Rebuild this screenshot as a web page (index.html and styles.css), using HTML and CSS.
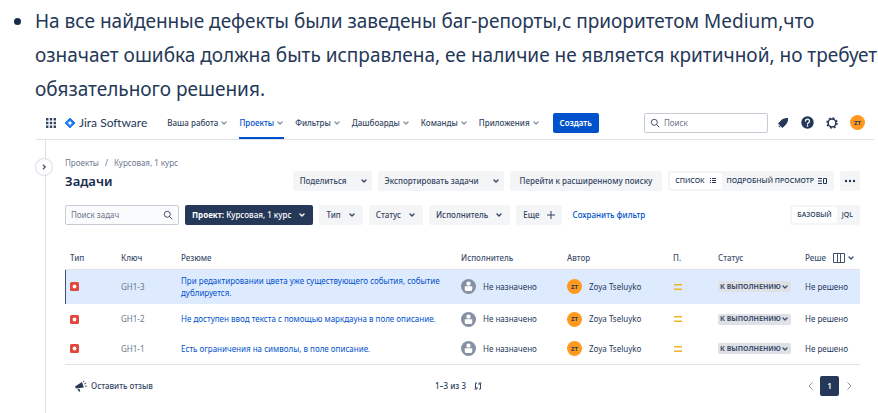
FILE: index.html
```html
<!DOCTYPE html>
<html lang="ru">
<head>
<meta charset="utf-8">
<title>Задачи — Jira Software</title>
<link rel="stylesheet" href="styles.css">
</head>
<body>
<svg class="defs" aria-hidden="true">
  <symbol id="chev" viewBox="0 0 8 8"><path d="M2 3 4 5l2-2" fill="none" stroke="currentColor" stroke-width="1.400" stroke-linecap="round" stroke-linejoin="round"/></symbol>
  <symbol id="lens" viewBox="0 0 10 10"><circle cx="4.300" cy="4.300" r="3" fill="none" stroke="currentColor"/><path d="m6.600 6.600 2.400 2.400" stroke="currentColor" stroke-linecap="round"/></symbol>
  <symbol id="bug" viewBox="0 0 9 9"><rect width="9" height="9" rx="1.500" fill="#e2473d"/><circle cx="4.500" cy="4.500" r="1.900" fill="#fff"/></symbol>
  <symbol id="person" viewBox="0 0 16 16"><circle cx="8" cy="8" r="8" fill="#8590a2"/><circle cx="8" cy="5" r="2.300" fill="#fff"/><path d="M4 7.800h8v3a2 2 0 0 1-2 2H6a2 2 0 0 1-2-2z" fill="#fff"/></symbol>
  <symbol id="medium" viewBox="0 0 10 10"><path d="M1 2.700h8M1 7.300h8" stroke="#f0b429" stroke-width="1.600"/></symbol>
</svg>

<ul class="notes">
  <li>На все найденные дефекты были заведены баг-репорты,с приоритетом Medium,что<br>означает ошибка должна быть исправлена, ее наличие не является критичной, но требует<br>обязательного решения.</li>
</ul>

<div class="app">
  <header class="topbar">
    <button class="icon-btn" aria-label="Приложения Atlassian"><svg width="10" height="10" viewBox="0 0 10 10" fill="#344563"><path d="M0 0h2.400v2.400H0zM3.800 0h2.400v2.400H3.800zM7.600 0H10v2.400H7.600zM0 3.800h2.400v2.400H0zM3.800 3.800h2.400v2.400H3.800zM7.600 3.800H10v2.400H7.600zM0 7.600h2.400V10H0zM3.800 7.600h2.400V10H3.800zM7.600 7.600H10V10H7.600z"/></svg></button>
    <a class="brand" href="#"><svg width="12" height="12" viewBox="0 0 12 12"><path d="M6 1 11 6 6 11 1 6z" fill="#2684ff" stroke="#2684ff" stroke-linejoin="round"/><path d="M6 1 3.500 3.500 6 6l2.500 2.500L11 6z" fill="#1868db" opacity=".4"/><path d="M6 4 8 6 6 8 4 6z" fill="#fff"/></svg><span>Jira Software</span></a>
    <nav class="nav">
      <a href="#">Ваша работа<svg class="chev"><use href="#chev"/></svg></a>
      <a class="active" href="#">Проекты<svg class="chev"><use href="#chev"/></svg></a>
      <a href="#">Фильтры<svg class="chev"><use href="#chev"/></svg></a>
      <a href="#">Дашбоарды<svg class="chev"><use href="#chev"/></svg></a>
      <a href="#">Команды<svg class="chev"><use href="#chev"/></svg></a>
      <a href="#">Приложения<svg class="chev"><use href="#chev"/></svg></a>
    </nav>
    <button class="btn primary">Создать</button>
    <div class="tools">
      <label class="field global"><svg class="lens"><use href="#lens"/></svg><input type="text" placeholder="Поиск" aria-label="Поиск"></label>
      <button class="icon-btn" aria-label="Уведомления"><svg width="12" height="12" viewBox="0 0 12 12" fill="#253858"><path d="M11 1C8 .700 5.400 1.800 3.700 3.700L1 6.600l4.400 4.400 2.900-2.700C10.200 6.600 11.300 4 11 1zM1.800 8.200l2 2A1.500 1.500 0 0 1 1.800 8.200z"/></svg></button>
      <button class="icon-btn" aria-label="Справка"><svg width="13" height="13" viewBox="0 0 13 13"><circle cx="6.500" cy="6.500" r="6.200" fill="#253858"/><path d="M4.500 5.100a2 2 0 1 1 2.900 1.800c-.600.300-.900.600-.9 1.200" fill="none" stroke="#fff" stroke-width="1.300" stroke-linecap="round"/><circle cx="6.500" cy="9.900" r=".8" fill="#fff"/></svg></button>
      <button class="icon-btn" aria-label="Настройки"><svg width="12" height="12" viewBox="0 0 12 12" fill="none" stroke="#253858"><circle cx="6" cy="6" r="3.900" stroke-width="1.500"/><circle cx="6" cy="6" r="5" stroke-width="1.500" stroke-dasharray="1.960 1.960"/></svg></button>
      <span class="avatar">ZT</span>
    </div>
  </header>

  <div class="body">
    <aside class="rail"><button class="expand" aria-label="Развернуть панель"><svg width="8" height="8" viewBox="0 0 8 8"><path d="M3 1.800 5.200 4 3 6.200" fill="none" stroke="#42526e" stroke-width="1.300"/></svg></button></aside>
    <main class="main">
      <div class="crumbs"><a href="#">Проекты</a><span>/</span><a href="#">Курсовая, 1 курс</a></div>
      <div class="row title-row">
        <h1>Задачи</h1>
        <div class="actions">
          <button class="btn wide">Поделиться<svg class="chev"><use href="#chev"/></svg></button>
          <button class="btn wide">Экспортировать задачи<svg class="chev"><use href="#chev"/></svg></button>
          <button class="btn advanced">Перейти к расширенному поиску</button>
          <div class="toggle">
            <button class="on">СПИСОК<svg width="8" height="8" viewBox="0 0 8 8" stroke="currentColor"><path d="M1 1.500h1M3 1.500h4M1 3.500h1M3 3.500h4M1 5.500h1M3 5.500h4"/></svg></button>
            <button>ПОДРОБНЫЙ ПРОСМОТР<svg width="9" height="8" viewBox="0 0 9 8" fill="none" stroke="currentColor"><path d="M0 1.500h4M0 4h4M0 6.500h4M5.500 1.500h3v5h-3z"/></svg></button>
          </div>
          <button class="btn more" aria-label="Ещё"><svg width="12" height="4" viewBox="0 0 12 4" fill="#253858"><circle cx="2" cy="2" r="1.200"/><circle cx="6" cy="2" r="1.200"/><circle cx="10" cy="2" r="1.200"/></svg></button>
        </div>
      </div>
      <div class="row filters">
        <label class="field issue"><input type="text" placeholder="Поиск задач" aria-label="Поиск задач"><svg class="lens"><use href="#lens"/></svg></label>
        <button class="btn dark"><span><b>Проект:</b> Курсовая, 1 курс</span><svg class="chev"><use href="#chev"/></svg></button>
        <button class="btn">Тип<svg class="chev"><use href="#chev"/></svg></button>
        <button class="btn">Статус<svg class="chev"><use href="#chev"/></svg></button>
        <button class="btn">Исполнитель<svg class="chev"><use href="#chev"/></svg></button>
        <button class="btn">Еще<svg width="8" height="8" viewBox="0 0 8 8"><path d="M4 0v8M0 4h8" stroke="currentColor"/></svg></button>
        <a class="save" href="#">Сохранить фильтр</a>
        <div class="toggle mode"><button class="on">БАЗОВЫЙ</button><button>JQL</button></div>
      </div>

      <table class="issues">
        <thead>
          <tr><th class="c-type">Тип</th><th class="c-key">Ключ</th><th>Резюме</th><th class="c-who">Исполнитель</th><th class="c-who">Автор</th><th class="c-prio">П.</th><th class="c-status">Статус</th><th class="c-res"><div class="res-head"><span>Реше</span><button class="icon-btn" aria-label="Столбцы"><svg width="12" height="10" viewBox="0 0 12 10" fill="none" stroke="currentColor"><path d="M.500.500h11v9H.500zM4.500.500v9M7.500.500v9"/></svg><svg class="chev"><use href="#chev"/></svg></button></div></th></tr>
        </thead>
        <tbody>
          <tr class="selected">
            <td><svg class="bug"><use href="#bug"/></svg></td><td><a class="key" href="#">GH1-3</a></td>
            <td><a href="#">При редактировании цвета уже существующего события, событие дублируется.</a></td>
            <td><span class="who"><svg class="person"><use href="#person"/></svg>Не назначено</span></td>
            <td><span class="who"><span class="avatar">ZT</span>Zoya Tseluyko</span></td>
            <td><svg class="medium"><use href="#medium"/></svg></td>
            <td><button class="status">К ВЫПОЛНЕНИЮ<svg class="chev"><use href="#chev"/></svg></button></td><td>Не решено</td>
          </tr>
          <tr>
            <td><svg class="bug"><use href="#bug"/></svg></td><td><a class="key" href="#">GH1-2</a></td>
            <td><a href="#">Не доступен ввод текста с помощью маркдауна в поле описание.</a></td>
            <td><span class="who"><svg class="person"><use href="#person"/></svg>Не назначено</span></td>
            <td><span class="who"><span class="avatar">ZT</span>Zoya Tseluyko</span></td>
            <td><svg class="medium"><use href="#medium"/></svg></td>
            <td><button class="status">К ВЫПОЛНЕНИЮ<svg class="chev"><use href="#chev"/></svg></button></td><td>Не решено</td>
          </tr>
          <tr>
            <td><svg class="bug"><use href="#bug"/></svg></td><td><a class="key" href="#">GH1-1</a></td>
            <td><a href="#">Есть ограничения на символы, в поле описание.</a></td>
            <td><span class="who"><svg class="person"><use href="#person"/></svg>Не назначено</span></td>
            <td><span class="who"><span class="avatar">ZT</span>Zoya Tseluyko</span></td>
            <td><svg class="medium"><use href="#medium"/></svg></td>
            <td><button class="status">К ВЫПОЛНЕНИЮ<svg class="chev"><use href="#chev"/></svg></button></td><td>Не решено</td>
          </tr>
        </tbody>
      </table>

      <footer class="foot">
        <button class="feedback"><svg width="12" height="12" viewBox="0 0 12 12"><path d="M0 6.500 7 2l1.800 5.600L1 8.600zM2.500 9h2l.8 2.500H3.700z" fill="#253858"/><path d="M8.300 2.200 9 .800M9.300 3.900l2-.900M9.900 6l1.900.200" stroke="#253858" stroke-width=".9"/></svg>Оставить отзыв</button>
        <div class="count">1–3 из 3<svg width="8" height="8" viewBox="0 0 8 8" fill="none" stroke="#344563"><path d="M3 1H1.500v5.500M.500 7h2.500V5M5 7h1.500V1.500M7.500 1H5v2"/></svg></div>
        <div class="pager">
          <button aria-label="Назад"><svg width="8" height="8" viewBox="0 0 8 8"><path d="M5.500.500 2 4l3.500 3.500" fill="none" stroke="#8993a4"/></svg></button>
          <button class="current">1</button>
          <button aria-label="Вперёд"><svg width="8" height="8" viewBox="0 0 8 8"><path d="M2.500.500 6 4 2.500 7.500" fill="none" stroke="#8993a4"/></svg></button>
        </div>
      </footer>
    </main>
  </div>
</div>
</body>
</html>
```
FILE: styles.css
```css
* { box-sizing: border-box; }
body { margin: 0; background: #fff; color: #253858; font: 8px/12px "Noto Sans", "Open Sans", sans-serif; }
button, input { font: inherit; color: inherit; border: 0; background: none; padding: 0; margin: 0; }
a { color: #0052cc; text-decoration: none; }
svg { flex: none; display: block; }
.defs { width: 0; height: 0; position: absolute; }
.chev { width: 8px; height: 8px; }
.lens { width: 10px; height: 10px; color: #42526e; }

.notes { margin: 0; padding: 4px 0 0 35px; font-size: 19px; line-height: 34px; color: #253858; list-style: none; white-space: nowrap; }
.notes li { position: relative; }
.notes li::before { content: ""; position: absolute; left: -21px; top: 14px; width: 7px; height: 7px; border-radius: 50%; background: #172b4d; }

.app { margin: 0 4px 0 36px; display: flex; flex-direction: column; }
.topbar { display: flex; align-items: center; height: 34px; padding: 0 9px 0 10px; border-bottom: 1px solid #dfe1e6; }
.icon-btn { display: flex; align-items: center; }
.brand { display: flex; align-items: center; gap: 3px; margin-left: 8px; color: #253858; font: 12px/16px Lato, sans-serif; }
.nav { display: flex; align-self: stretch; gap: 11px; margin-left: 20px; font-weight: 500; }
.nav a { display: flex; align-items: center; gap: 2px; color: #344563; border-bottom: 2px solid transparent; border-top: 2px solid transparent; }
.nav .chev { color: #8993a4; }
.nav .active { color: #0052cc; border-bottom-color: #0052cc; }
.btn { display: flex; align-items: center; justify-content: center; gap: 7px; height: 20px; padding: 0 7px; border-radius: 2px; background: #f4f5f7; color: #344563; font-weight: 500; white-space: nowrap; }
.btn.wide { gap: 13px; padding-right: 4px; }
.btn.advanced { padding: 0 10px; }
.btn.primary { margin-left: 13px; background: #0052cc; color: #fff; font-weight: 600; }
.tools { display: flex; align-items: center; gap: 12px; margin-left: auto; }
.field { display: flex; align-items: center; height: 20px; gap: 4px; padding: 0 5px; border: 1px solid #c7ccd4; border-radius: 2px; }
.field input { flex: 1; min-width: 0; outline: 0; }
.field input::placeholder { color: #6b778c; opacity: 1; }
.field.global { width: 124px; margin-right: -3px; }
.field.issue { width: 114px; background: #fafbfc; }
.avatar { display: flex; align-items: center; justify-content: center; width: 15px; height: 15px; border-radius: 50%; background: #ff991f; color: #253858; font-size: 6px; font-weight: 700; flex: none; }

.body { display: flex; min-height: 273px; }
.rail { width: 10px; border-right: 1px solid #dfe1e6; }
.expand { position: relative; display: flex; align-items: center; justify-content: center; margin-top: 19px; width: 16px; height: 16px; border-radius: 50%; background: #fff; box-shadow: 0 0 2px #97a0af; }
.main { flex: 1; min-width: 0; padding: 17px 14px 0 19px; }
.crumbs { display: flex; gap: 6px; color: #6b778c; }
.crumbs a { color: inherit; }
.row { display: flex; align-items: center; gap: 6px; }
.title-row { justify-content: space-between; margin-top: 2px; }
h1 { margin: 0; font-size: 13px; line-height: 20px; font-weight: 600; color: #172b4d; }
.actions { display: flex; gap: 6px; }
.toggle { display: flex; align-items: center; height: 20px; padding: 2px; border-radius: 2px; background: #f4f5f7; font-size: 7px; font-weight: 500; }
.toggle button { display: flex; align-items: center; gap: 4px; height: 16px; padding: 0 5px; white-space: nowrap; }
.toggle .on { background: #fff; border-radius: 2px; }
.btn.more { padding: 0 4px; }
.filters { margin-top: 14px; }
.btn.dark { background: #253858; color: #fff; }
.save { margin-left: 5px; font-weight: 500; }
.mode { margin-left: auto; }

.issues { width: 100%; margin-top: 22px; table-layout: fixed; border-collapse: collapse; border-bottom: 1px solid #dfe1e6; }
.issues th, .issues td { padding: 0 5px; text-align: left; height: 30px; }
.issues th { height: 22px; font-weight: 500; color: #42526e; border-bottom: 1px solid #dfe1e6; }
.issues td { white-space: nowrap; }
.issues td:nth-child(3) { white-space: normal; }
.issues .selected td { height: 35px; background: #deebff; }
.issues .selected td:first-child { box-shadow: inset 1px 0 #42526e; }
.c-type { width: 51px; }
.c-key { width: 60px; }
.c-who { width: 106px; }
.c-prio { width: 45px; }
.c-status { width: 87px; }
.c-res { width: 60px; }
.res-head { display: flex; justify-content: space-between; }
.res-head .icon-btn { gap: 2px; }
.key { color: #6b778c; }
.bug { width: 9px; height: 9px; }
.person { width: 15px; height: 15px; }
.medium { width: 10px; height: 10px; }
.who { display: flex; align-items: center; gap: 7px; }
.status { display: flex; align-items: center; height: 11px; padding: 0 2px; border-radius: 2px; background: #dfe1e6; color: #42526e; font-size: 7px; line-height: 10px; font-weight: 700; }

.foot { display: grid; grid-template-columns: 1fr auto 1fr; align-items: center; margin-top: 11px; }
.feedback { display: flex; align-items: center; gap: 4px; margin-left: 10px; font-weight: 500; color: #344563; }
.count { display: flex; align-items: center; gap: 8px; padding-right: 8px; font-weight: 500; }
.pager { display: flex; justify-content: flex-end; padding-right: 2px; }
.pager button { display: flex; align-items: center; justify-content: center; width: 19px; height: 20px; border-radius: 2px; }
.pager .current { background: #253858; color: #fff; font-weight: 600; }
```
